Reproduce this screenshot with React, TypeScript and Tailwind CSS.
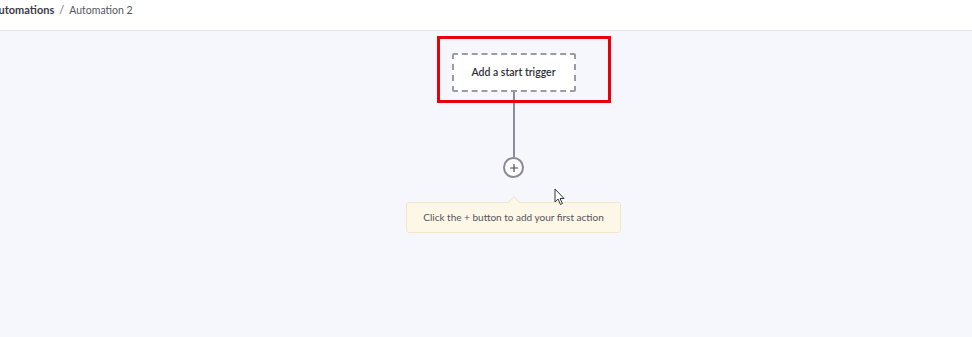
import { Plus } from "lucide-react";

const Header = () => (
  <div className="flex h-[31px] items-center border-b border-[#e4e0e8] bg-white pb-[9px] font-['Lato',sans-serif]">
    <span className="-ml-[9px] text-[11px] font-bold text-[#3b3b44]">Automations</span>
    <span className="mx-[5px] text-[11px] text-[#6b6b75]">/</span>
    <span className="text-[10.5px] text-[#55555f]">Automation 2</span>
  </div>
);

const Cursor = () => (
  <svg viewBox="0 0 12 18" className="absolute left-[554px] top-[188px] h-[18px] w-[12px]">
    <path d="M1 1 L1 14 L4 11 L6.5 16.5 L8.5 15.5 L6 10.5 L10 10.5 Z" fill="white" stroke="#333" strokeWidth="1" strokeLinejoin="round" />
  </svg>
);

export default function App() {
  return (
    <div className="relative h-[337px] w-[972px] overflow-hidden bg-[#f6f7fd] font-['Lato',sans-serif]">
      <Header />
      <div className="flex flex-col items-center pl-[55px] pt-[22px]">
        <div className="flex h-[39px] w-[124px] items-center justify-center rounded-[2px] border-2 border-dashed border-[#9d9ba8] bg-white text-[10.5px] font-semibold text-[#2e2e36]">
          Add a start trigger
        </div>
        <div className="h-[65px] w-[2px] bg-[#8d8c98]" />
        <div className="flex h-[21px] w-[21px] items-center justify-center rounded-full border-2 border-[#8a8995] bg-white text-[#4a4953]">
          <Plus size={12} strokeWidth={2.4} />
        </div>
        <div className="relative mt-[24px] flex h-[31px] w-[215px] items-center justify-center rounded-[3px] border border-[#f0e6c9] bg-[#fdf7e7] text-[10px] text-[#55545c]">
          <div className="absolute -top-[5px] left-1/2 h-[9px] w-[9px] -translate-x-1/2 rotate-45 border-l border-t border-[#f0e6c9] bg-[#fdf7e7]" />
          Click the + button to add your first action
        </div>
      </div>
      <div className="absolute left-[437px] top-[36px] h-[67px] w-[174px] border-[3px] border-[#e8000b]" />
      <Cursor />
    </div>
  );
}
